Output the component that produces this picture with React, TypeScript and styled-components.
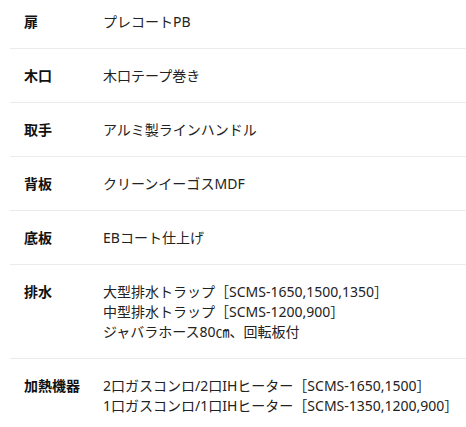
import styled, { createGlobalStyle } from 'styled-components';

const GlobalStyle = createGlobalStyle`
  body {
    margin: 0;
    background: #fff;
    font-family: "Noto Sans", "Noto Sans CJK JP", sans-serif;
    color: #222;
  }
`;

const specs: { label: string; lines: string[] }[] = [
  { label: '扉', lines: ['プレコートPB'] },
  { label: '木口', lines: ['木口テープ巻き'] },
  { label: '取手', lines: ['アルミ製ラインハンドル'] },
  { label: '背板', lines: ['クリーンイーゴスMDF'] },
  { label: '底板', lines: ['EBコート仕上げ'] },
  {
    label: '排水',
    lines: ['大型排水トラップ［SCMS-1650,1500,1350］', '中型排水トラップ［SCMS-1200,900］', 'ジャバラホース80㎝、回転板付'],
  },
  {
    label: '加熱機器',
    lines: ['2口ガスコンロ/2口IHヒーター［SCMS-1650,1500］', '1口ガスコンロ/1口IHヒーター［SCMS-1350,1200,900］'],
  },
];

function App() {
  return (
    <>
      <GlobalStyle />
      <SpecTable>
        {specs.map((spec) => (
          <Row key={spec.label}>
            <Label>{spec.label}</Label>
            <Value>
              {spec.lines.map((line) => (
                <Line key={line}>{line}</Line>
              ))}
            </Value>
          </Row>
        ))}
      </SpecTable>
    </>
  );
}
export default App;

const SpecTable = styled.div`
  margin: -5px 0 0 10px;
  display: flex;
  flex-direction: column;
`;

const Row = styled.div`
  display: grid;
  grid-template-columns: 79px 1fr;
  padding: 17px 0 16px;
  border-bottom: 1px solid #ebebeb;
  font-size: 14px;
  line-height: 20px;
`;

const Label = styled.div`
  padding-left: 14px;
  font-weight: 700;
  color: #111;
`;

const Value = styled.div`
  padding-left: 14px;
  display: flex;
  flex-direction: column;
`;

const Line = styled.div`
  white-space: nowrap;
`;
